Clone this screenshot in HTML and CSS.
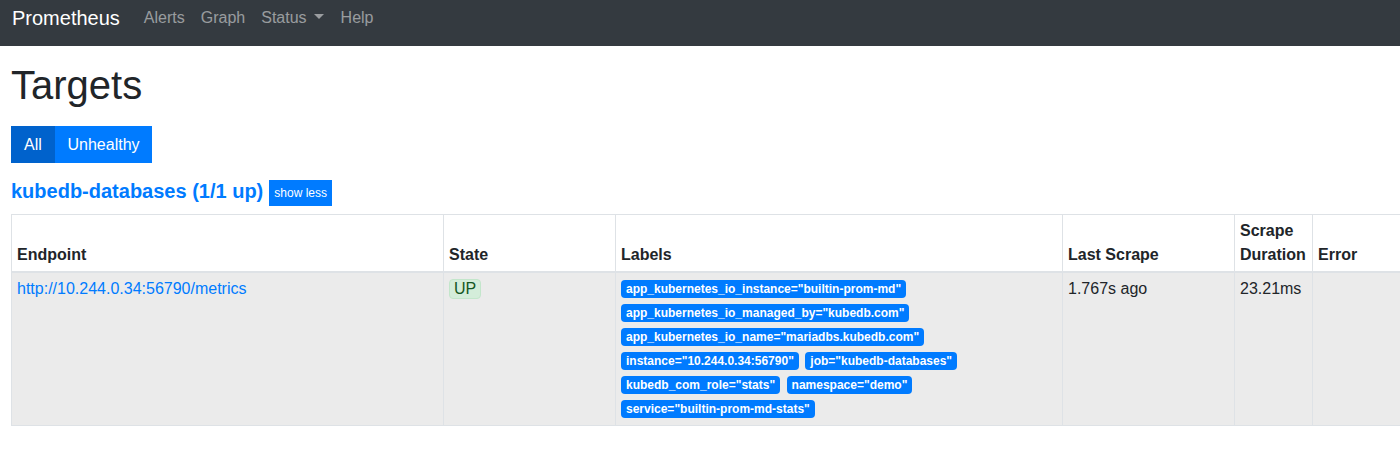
FILE: index.html
```html
<!DOCTYPE html>
<html>
<head>
<meta charset="utf-8">
<link rel="stylesheet" href="styles.css">
</head>
<body>
<nav class="navbar">
  <a class="brand" href="#">Prometheus</a>
  <ul class="nav">
    <li><a class="nav-link" href="#">Alerts</a></li>
    <li><a class="nav-link" href="#">Graph</a></li>
    <li><a class="nav-link dropdown" href="#">Status</a></li>
    <li><a class="nav-link" href="#">Help</a></li>
  </ul>
</nav>
<main class="container">
  <h1 class="title">Targets</h1>
  <div class="btn-group">
    <button class="btn btn-active">All</button><button class="btn">Unhealthy</button>
  </div>
  <div class="pool-head">
    <a class="pool-title" href="#">kubedb-databases (1/1 up)</a>
    <button class="btn-sm">show less</button>
  </div>
  <div class="table-wrap">
    <table class="targets">
      <colgroup>
        <col class="c-endpoint"><col class="c-state"><col class="c-labels"><col class="c-last"><col class="c-dur"><col class="c-err">
      </colgroup>
      <thead>
        <tr>
          <th>Endpoint</th>
          <th>State</th>
          <th>Labels</th>
          <th>Last Scrape</th>
          <th>Scrape Duration</th>
          <th>Error</th>
        </tr>
      </thead>
      <tbody>
        <tr>
          <td><a class="endpoint" href="#">http://10.244.0.34:56790/metrics</a></td>
          <td><span class="state-up">UP</span></td>
          <td class="labels">
            <span class="badge">app_kubernetes_io_instance="builtin-prom-md"</span>
            <span class="badge">app_kubernetes_io_managed_by="kubedb.com"</span>
            <span class="badge">app_kubernetes_io_name="mariadbs.kubedb.com"</span>
            <span class="badge">instance="10.244.0.34:56790"</span>
            <span class="badge">job="kubedb-databases"</span>
            <span class="badge">kubedb_com_role="stats"</span>
            <span class="badge">namespace="demo"</span>
            <span class="badge">service="builtin-prom-md-stats"</span>
          </td>
          <td>1.767s ago</td>
          <td>23.21ms</td>
          <td></td>
        </tr>
      </tbody>
    </table>
  </div>
</main>
</body>
</html>
```

FILE: styles.css
```css
* { box-sizing: border-box; }
html, body {
  margin: 0;
  padding: 0;
  overflow: hidden;
}
body {
  font-family: "Liberation Sans", Arial, sans-serif;
  font-size: 16px;
  line-height: 1.5;
  color: #212529;
  background: #fff;
}
a { text-decoration: none; }

.navbar {
  height: 46px;
  background: #343a40;
  display: flex;
  align-items: center;
  padding: 0 0 10px 12px;
}
.brand {
  color: #fff;
  font-size: 20px;
  line-height: 30px;
  margin-right: 16px;
}
.nav {
  display: flex;
  list-style: none;
  margin: 0;
  padding: 0;
}
.nav-link {
  display: block;
  color: rgba(255, 255, 255, 0.5);
  padding: 0 8px;
  line-height: 24px;
}
.dropdown::after {
  content: "";
  display: inline-block;
  margin-left: 7px;
  margin-right: 1px;
  vertical-align: 4px;
  border-top: 5px solid;
  border-left: 5px solid transparent;
  border-right: 5px solid transparent;
}

.container {
  padding: 0 0 0 11px;
}
.title {
  font-size: 40px;
  font-weight: 400;
  line-height: 48px;
  margin: 15px 0 17px;
}
.btn-group {
  display: flex;
}
.btn {
  border: 0;
  border-radius: 0;
  background: #007bff;
  color: #fff;
  font-family: inherit;
  font-size: 16px;
  line-height: 24px;
  padding: 6.5px 12.5px;
}
.btn-active {
  background: #0062cc;
  min-width: 44px;
}
.pool-head {
  margin-top: 16px;
  display: flex;
  align-items: baseline;
  margin-bottom: 7px;
}
.pool-title {
  color: #007bff;
  font-weight: 700;
  font-size: 20px;
  line-height: 24px;
}
.btn-sm {
  margin-left: 6px;
  border: 0;
  border-radius: 0;
  background: #007bff;
  color: #fff;
  font-family: inherit;
  font-size: 12px;
  line-height: 18px;
  padding: 4px 5px;
  position: relative;
  top: -1px;
}

.table-wrap {
  overflow: hidden;
}
.targets {
  width: 1430px;
  table-layout: fixed;
  border-collapse: collapse;
}
.c-endpoint { width: 432px; }
.c-state { width: 172px; }
.c-labels { width: 447px; }
.c-last { width: 172px; }
.c-dur { width: 78px; }
.targets th,
.targets td {
  border: 1px solid #dee2e6;
  padding: 4px 5px;
  text-align: left;
  vertical-align: top;
}
.targets th {
  vertical-align: bottom;
  font-weight: 700;
  border-bottom: 2px solid #dee2e6;
}
.targets tbody tr {
  background: #ebebeb;
}
.endpoint {
  color: #007bff;
}
.state-up {
  display: inline-block;
  background: #d4edda;
  color: #155724;
  border-radius: 4px;
  padding: 0 4px;
  line-height: 18px;
  border: 1px solid #c3e6cb;
}
.badge {
  display: inline-block;
  background: #007bff;
  color: #fff;
  font-size: 12px;
  font-weight: 700;
  line-height: 1;
  padding: 3px 5px;
  border-radius: 4px;
  margin-right: 2px;
  white-space: nowrap;
  vertical-align: 1px;
}
```
